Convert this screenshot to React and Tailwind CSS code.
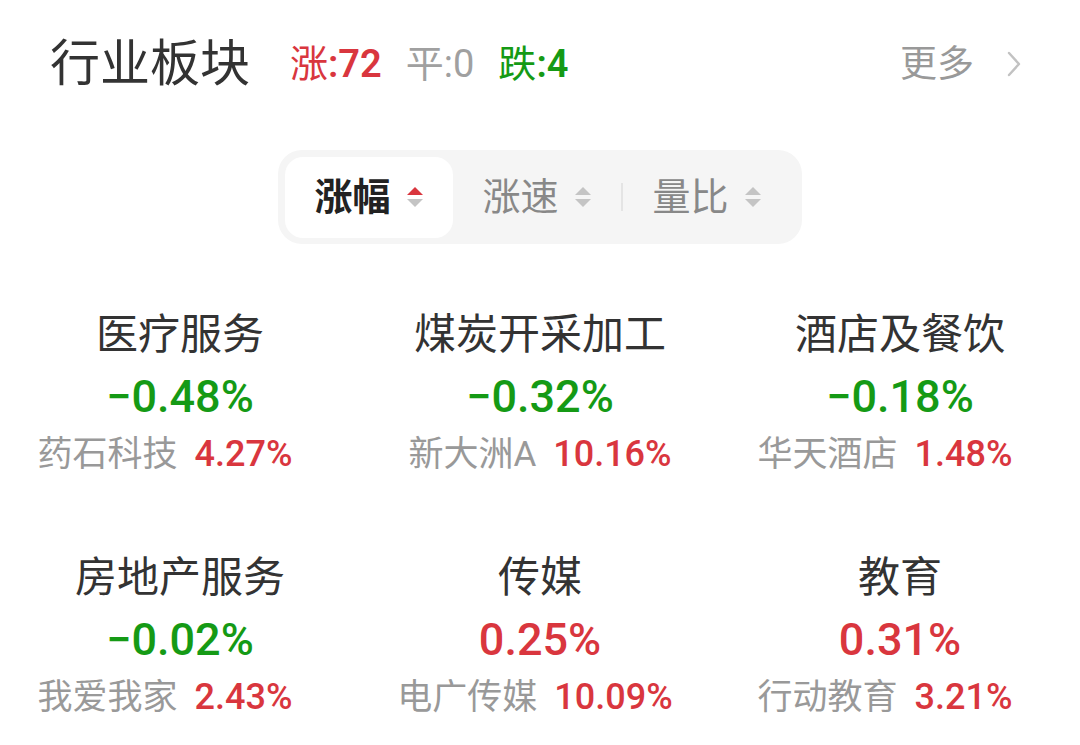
import React from "react";

const FONT = { fontFamily: 'Roboto, "Noto Sans CJK SC", sans-serif' };

const sectors = [
  { name: "医疗服务", pct: "−0.48%", up: false, stock: "药石科技", stockPct: "4.27%", shift: "mr-[30px]" },
  { name: "煤炭开采加工", pct: "−0.32%", up: false, stock: "新大洲A", stockPct: "10.16%", shift: "mr-0" },
  { name: "酒店及餐饮", pct: "−0.18%", up: false, stock: "华天酒店", stockPct: "1.48%", shift: "mr-[30px]" },
  { name: "房地产服务", pct: "−0.02%", up: false, stock: "我爱我家", stockPct: "2.43%", shift: "mr-[30px]" },
  { name: "传媒", pct: "0.25%", up: true, stock: "电广传媒", stockPct: "10.09%", shift: "mr-[10px]" },
  { name: "教育", pct: "0.31%", up: true, stock: "行动教育", stockPct: "3.21%", shift: "mr-[30px]" },
];

// 排序箭头：上下两个小三角
function SortArrows({ active }) {
  return (
    <svg width="18" height="26" viewBox="0 0 18 26" className="shrink-0">
      <path d="M9 3 L17 11 L1 11 Z" fill={active ? "#d9363e" : "#c4c4c4"} />
      <path d="M9 23 L17 15 L1 15 Z" fill="#c4c4c4" />
    </svg>
  );
}

function Tab({ label, active, arrowActive }) {
  return (
    <div
      className={`w-[168px] h-[81px] flex items-center justify-center gap-[15px] rounded-[18px] ${
        active ? "bg-white" : ""
      }`}
    >
      <span className={`text-[38px] leading-none ${active ? "text-[#222] font-bold" : "text-[#888]"}`}>
        {label}
      </span>
      <SortArrows active={arrowActive} />
    </div>
  );
}

export default function App() {
  return (
    <div className="w-[1080px] h-[745px] bg-white overflow-hidden" style={FONT}>
      {/* 标题栏 */}
      <div className="h-[128px] flex items-center pl-[50px] pr-[58px]">
        <span className="text-[50px] text-[#333] leading-none">行业板块</span>
        <div className="flex items-center gap-[24px] ml-[40px] text-[38px] leading-none">
          <span className="text-[#d9363e]">
            涨<span className="font-semibold">:72</span>
          </span>
          <span className="text-[#a0a0a0]">平:0</span>
          <span className="text-[#159a15]">
            跌<span className="font-semibold">:4</span>
          </span>
        </div>
        <div className="ml-auto flex items-center gap-[32px]">
          <span className="text-[37px] text-[#999] leading-none">更多</span>
          <svg width="16" height="28" viewBox="0 0 16 28">
            <path d="M3 3 L13 14 L3 25" fill="none" stroke="#c2c2c2" strokeWidth="2.4" strokeLinecap="round" strokeLinejoin="round" />
          </svg>
        </div>
      </div>

      {/* 排序切换 */}
      <div className="mt-[22px] flex justify-center">
        <div className="w-[524px] h-[94px] bg-[#f5f5f5] rounded-[24px] flex items-center px-[7px]">
          <Tab label="涨幅" active arrowActive />
          <Tab label="涨速" />
          <div className="w-[2px] h-[28px] bg-[#e4e4e4]" />
          <Tab label="量比" />
        </div>
      </div>

      {/* 板块列表 */}
      <div className="mt-[61px] grid grid-cols-3 gap-y-[67px]">
        {sectors.map((s) => (
          <div key={s.name} className="flex flex-col items-center">
            <div className="h-[60px] flex items-center text-[42px] text-[#333] leading-none">{s.name}</div>
            <div
              className={`h-[62px] flex items-center text-[45px] font-medium leading-none ${
                s.up ? "text-[#d9363e]" : "text-[#159a15]"
              }`}
            >
              {s.pct}
            </div>
            <div className={`h-[54px] flex items-center gap-[17px] leading-none ${s.shift}`}>
              <span className="text-[35px] text-[#999]">{s.stock}</span>
              <span className="text-[36px] font-medium text-[#d9363e]">{s.stockPct}</span>
            </div>
          </div>
        ))}
      </div>
    </div>
  );
}
